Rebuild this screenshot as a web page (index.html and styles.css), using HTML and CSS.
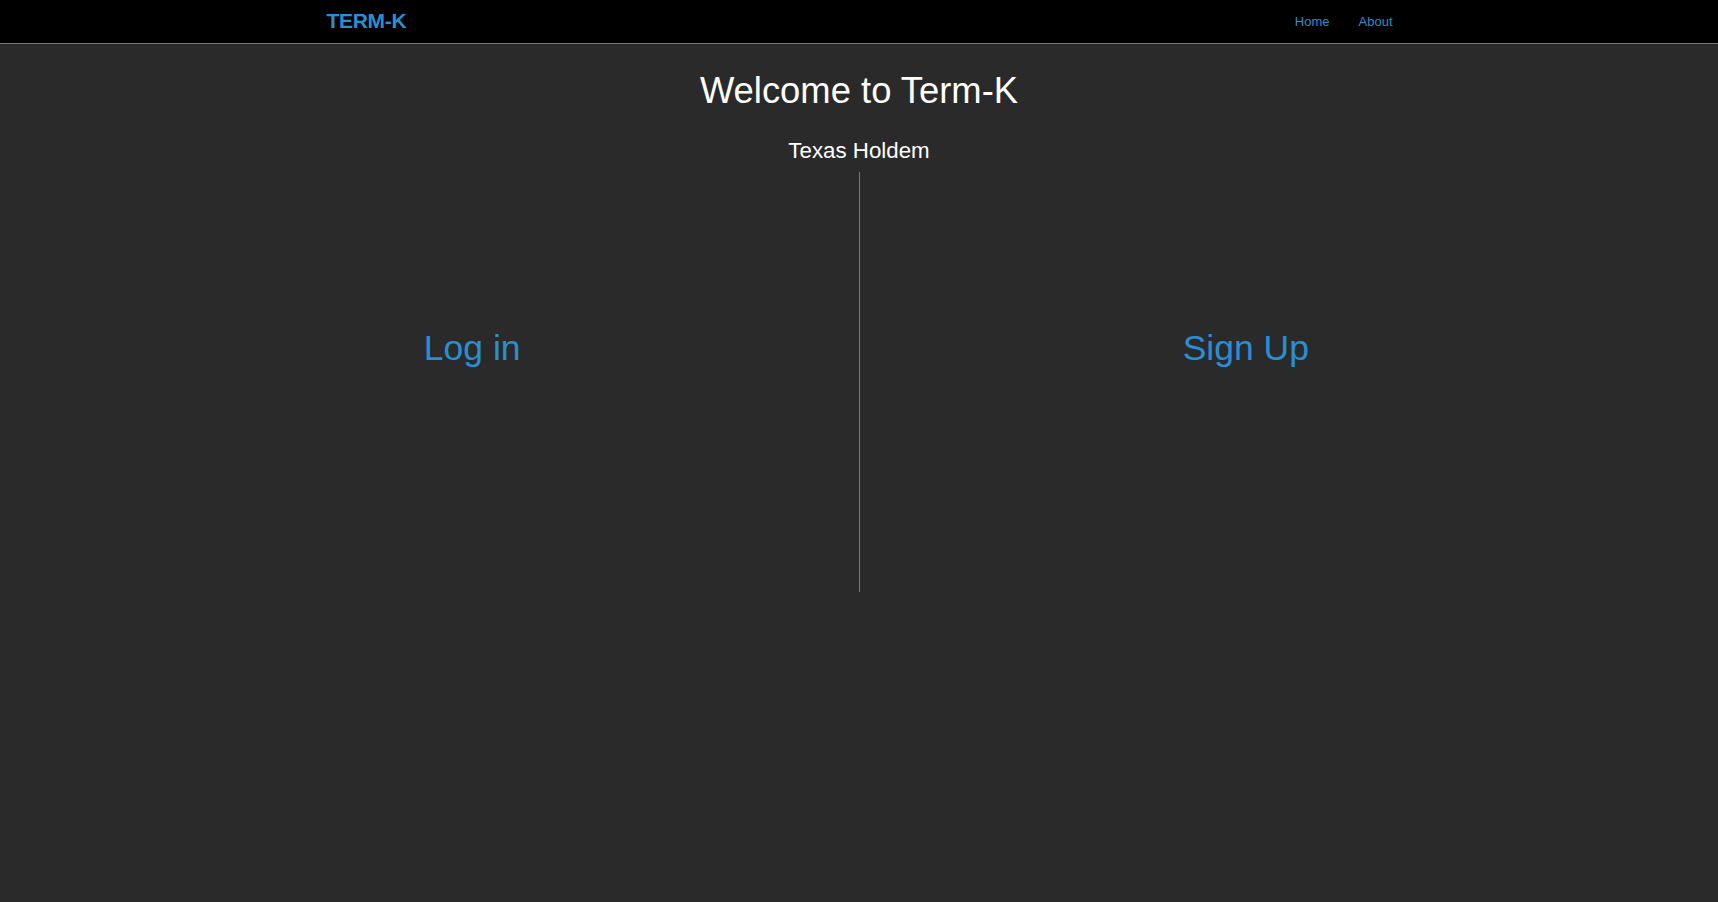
FILE: index.html
```html
<!DOCTYPE html>
<html lang="en">
<head>
<meta charset="utf-8">
<title>Term-K</title>
<link rel="stylesheet" href="styles.css">
</head>
<body>
<nav class="navbar">
  <div class="nav-inner">
    <a class="brand" href="#">TERM-K</a>
    <ul class="nav-links">
      <li><a href="#">Home</a></li>
      <li><a href="#">About</a></li>
    </ul>
  </div>
</nav>
<main class="main">
  <h1 class="title">Welcome to Term-K</h1>
  <h3 class="subtitle">Texas Holdem</h3>
  <div class="split">
    <section class="pane pane-left">
      <a class="pane-link" href="#">Log in</a>
    </section>
    <section class="pane pane-right">
      <a class="pane-link" href="#">Sign Up</a>
    </section>
  </div>
</main>
</body>
</html>
```
FILE: styles.css
```css
html, body {
  margin: 0;
  padding: 0;
}
body {
  background: #2a2a2a;
  color: #ffffff;
  font-family: "Liberation Sans", Arial, sans-serif;
  min-height: 902px;
}
a {
  text-decoration: none;
  color: #2a8ed3;
}
.navbar {
  background: #000000;
  height: 43px;
  border-bottom: 1px solid #2a8ed3;
}
.nav-inner {
  width: 1067px;
  margin: 0 auto;
  height: 100%;
  box-sizing: border-box;
  padding: 0 0 1px 1px;
  display: flex;
  align-items: center;
  justify-content: space-between;
}
.brand {
  font-size: 21px;
  font-weight: bold;
  letter-spacing: -0.3px;
}
.nav-links {
  list-style: none;
  margin: 0;
  padding: 0;
  display: flex;
  gap: 29px;
}
.nav-links a {
  font-size: 13px;
}
.main {
  width: 90%;
  margin: 0 auto;
}
.title {
  margin: 27px 0 0;
  font-size: 36.4px;
  line-height: 40px;
  font-weight: normal;
  text-align: center;
}
.subtitle {
  margin: 27px 0 0;
  font-size: 22.3px;
  line-height: 26px;
  font-weight: normal;
  text-align: center;
}
.split {
  margin-top: 8px;
  display: flex;
  height: 420px;
}
.pane {
  flex: 1;
  text-align: center;
  padding-top: 156px;
  box-sizing: border-box;
}
.pane-left {
  border-right: 1px solid #2a8ed3;
}
.pane-link {
  font-size: 35.5px;
  line-height: 40px;
}
```
